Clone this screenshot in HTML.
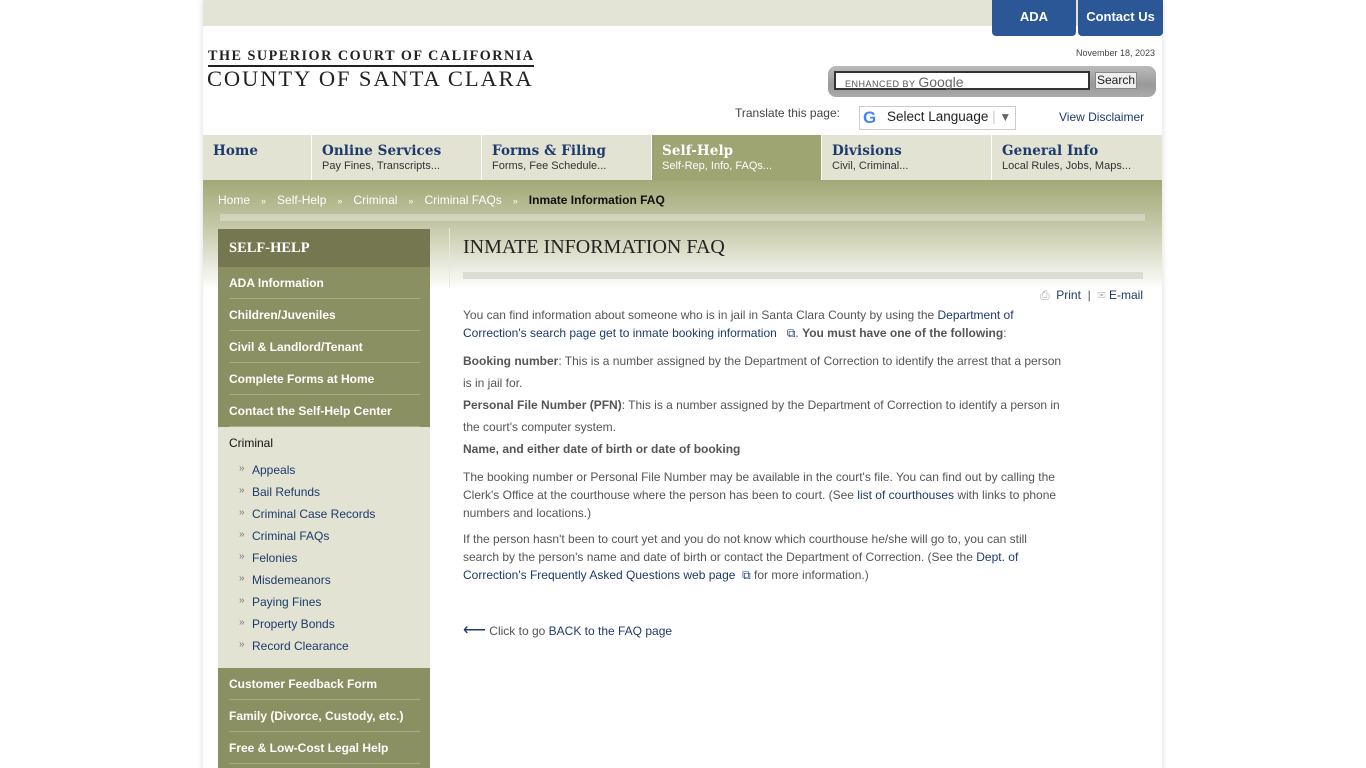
<!DOCTYPE html>
<html><head><meta charset="utf-8"><style>
*{margin:0;padding:0;box-sizing:border-box}
html,body{width:1366px;height:768px;overflow:hidden}
body{background:#fff;font-family:"Liberation Sans",Arial,sans-serif;position:relative}
.a{position:absolute}
a{color:#1d3a6c;text-decoration:none}
#page{left:203px;top:0;width:959px;height:790px;background:#fff;box-shadow:0 0 6px rgba(0,0,0,.15)}
.topband{left:203px;top:0;width:959px;height:26px;background:#e3e4d5}
.btn{top:0;height:36px;background:#2b5797;color:#fff;font-weight:bold;font-size:13px;text-align:center;line-height:34px;border-radius:0 0 4px 4px}
.tab{top:135px;height:45px;background:#e2e3d3;padding:8px 0 0 10px;border-right:1px solid #fff}
.tab b{display:block;font-family:"DejaVu Serif","Liberation Serif",serif;font-size:13.5px;color:#1d3a6c;letter-spacing:.1px}
.tab span{display:block;font-size:11px;color:#333;margin-top:1px}
.tab.on{background:#9fa473}.tab.on b,.tab.on span{color:#fff}
.band{left:203px;top:180px;width:959px;height:110px;background:linear-gradient(#a3a877 0,#c8cbac 45%,#fff 100%)}
.crumb{top:193px;left:218px;font-size:12px;color:#fff}
.crumb i{font-style:normal;font-size:9px;margin:0 11px}
.side{left:218px;width:212px}
.sh{top:229px;height:38px;background:#74774f;color:#fff;font-family:"Liberation Serif",serif;font-weight:bold;font-size:14.5px;padding:11px 11px}
.si{height:32px;background:#8b9062;color:#fff;font-weight:bold;font-size:12px;padding:9px 11px;position:relative}
.si:after{content:"";position:absolute;left:11px;right:10px;bottom:0;border-bottom:1px solid #a9ad86}
.sub{background:#e2e3d3}
.sub div{font-size:12px;height:22px;padding-left:34px;position:relative;color:#1d3a6c}
.sub div.it:before{content:"»";position:absolute;left:21px;top:0;font-size:10px;color:#777}
.c{left:463px;width:600px;font-size:12px;color:#555;line-height:18px}
b.k{color:#555}
</style></head><body>
<div class="a" id="page"></div>
<div class="a topband"></div>
<div class="a btn" style="left:992px;width:84px">ADA</div>
<div class="a btn" style="left:1078px;width:85px">Contact Us</div>
<div class="a" style="left:208px;top:48px;font-family:'Liberation Serif',serif;font-weight:bold;font-size:14.2px;letter-spacing:1.5px;color:#222;white-space:nowrap">THE SUPERIOR COURT OF CALIFORNIA</div>
<div class="a" style="left:208px;top:65px;width:326px;border-top:2px solid #222"></div>
<div class="a" style="left:207px;top:66px;font-family:'Liberation Serif',serif;font-size:22.5px;letter-spacing:1.9px;color:#222;white-space:nowrap">COUNTY OF SANTA CLARA</div>
<div class="a" style="left:1076px;top:48px;font-size:9px;color:#444">November 18, 2023</div>
<div class="a" style="left:828px;top:66px;width:328px;height:31px;border-radius:8px;background:linear-gradient(#bbb,#999 60%,#aaa)"></div>
<div class="a" style="left:834px;top:71px;width:256px;height:19px;background:#fff;border:2px solid #333;font-size:9px;color:#555;padding:1px 0 0 9px;letter-spacing:.5px">ENHANCED BY <span style="font-size:14px;color:#666;letter-spacing:0">Google</span></div>
<div class="a" style="left:1095px;top:72px;width:42px;height:17px;background:#eee;border:1px solid #888;font-size:12px;color:#222;text-align:center;line-height:15px">Search</div>
<div class="a" style="left:735px;top:106px;font-size:12px;color:#444">Translate this page:</div>
<div class="a" style="left:859px;top:106px;width:157px;height:24px;border:1px solid #ccc;background:#fff;font-size:13.5px;color:#222;padding:2px 0 0 27px">Select Language <span style="color:#ccc">|</span> <span style="color:#666;font-size:12px">▼</span></div>
<div class="a" style="left:863px;top:108px;font-weight:bold;font-size:17px;color:#4285f4">G</div>
<div class="a" style="left:1059px;top:110px;font-size:12px;color:#1d3a6c">View Disclaimer</div>
<div class="a tab" style="left:203px;width:109px"><b>Home</b></div>
<div class="a tab" style="left:312px;width:170px"><b>Online Services</b><span>Pay Fines, Transcripts...</span></div>
<div class="a tab" style="left:482px;width:170px"><b>Forms &amp; Filing</b><span>Forms, Fee Schedule...</span></div>
<div class="a tab on" style="left:652px;width:170px"><b>Self-Help</b><span>Self-Rep, Info, FAQs...</span></div>
<div class="a tab" style="left:822px;width:170px"><b>Divisions</b><span>Civil, Criminal...</span></div>
<div class="a tab" style="left:992px;width:170px;border:0"><b>General Info</b><span>Local Rules, Jobs, Maps...</span></div>
<div class="a band"></div>
<div class="a crumb">Home<i>»</i>Self-Help<i>»</i>Criminal<i>»</i>Criminal FAQs<i>»</i><b style="color:#111">Inmate Information FAQ</b></div>
<div class="a" style="left:220px;top:214px;width:925px;height:7px;background:rgba(255,255,255,.3)"></div>
<div class="a" style="left:449px;top:228px;width:1px;height:60px;background:#e8e9dc"></div>
<div class="a side sh">SELF-HELP</div>
<div class="a side" style="top:267px">
<div class="si">ADA Information</div><div class="si">Children/Juveniles</div><div class="si">Civil &amp; Landlord/Tenant</div><div class="si">Complete Forms at Home</div><div class="si">Contact the Self-Help Center</div>
<div class="sub" style="padding:9px 0 7px"><div style="padding-left:11px;color:#111;height:27px">Criminal</div>
<div class="it">Appeals</div><div class="it">Bail Refunds</div><div class="it">Criminal Case Records</div><div class="it">Criminal FAQs</div><div class="it">Felonies</div><div class="it">Misdemeanors</div><div class="it">Paying Fines</div><div class="it">Property Bonds</div><div class="it">Record Clearance</div></div>
<div class="si">Customer Feedback Form</div><div class="si">Family (Divorce, Custody, etc.)</div><div class="si">Free &amp; Low-Cost Legal Help</div><div class="si"></div>
</div>
<div class="a" style="left:463px;top:236px;font-family:'Liberation Serif',serif;font-size:20px;color:#222">INMATE INFORMATION FAQ</div>
<div class="a" style="left:463px;top:272px;width:680px;height:7px;background:#dcdcd6"></div>
<div class="a" style="left:1000px;top:288px;width:143px;text-align:right;font-size:12px;color:#1d3a6c"><span style="color:#aaa">⎙</span>&nbsp; Print &nbsp;<span style="color:#555">|</span>&nbsp; <span style="color:#aaa">✉</span> E-mail</div>
<div class="a c" style="top:306px">You can find information about someone who is in jail in Santa Clara County by using the <a>Department of Correction's search page get to inmate booking information</a> &nbsp; <a>⧉</a>. <b class="k">You must have one of the following</b>:</div>
<div class="a c" style="top:350px;line-height:22px"><b class="k">Booking number</b>: This is a number assigned by the Department of Correction to identify the arrest that a person is in jail for.<br><b class="k">Personal File Number (PFN)</b>: This is a number assigned by the Department of Correction to identify a person in the court's computer system.<br><b class="k">Name, and either date of birth or date of booking</b></div>
<div class="a c" style="top:468px">The booking number or Personal File Number may be available in the court's file. You can find out by calling the Clerk's Office at the courthouse where the person has been to court. (See <a>list of courthouses</a> with links to phone numbers and locations.)</div>
<div class="a c" style="top:530px">If the person hasn't been to court yet and you do not know which courthouse he/she will go to, you can still search by the person's name and date of birth or contact the Department of Correction. (See the <a>Dept. of Correction's Frequently Asked Questions web page</a> &nbsp;<a>⧉</a> for more information.)</div>
<div class="a c" style="top:622px"><span style="color:#1d3a6c;font-size:16px">⟵</span> Click to go <a>BACK to the FAQ page</a></div>
</body></html>
